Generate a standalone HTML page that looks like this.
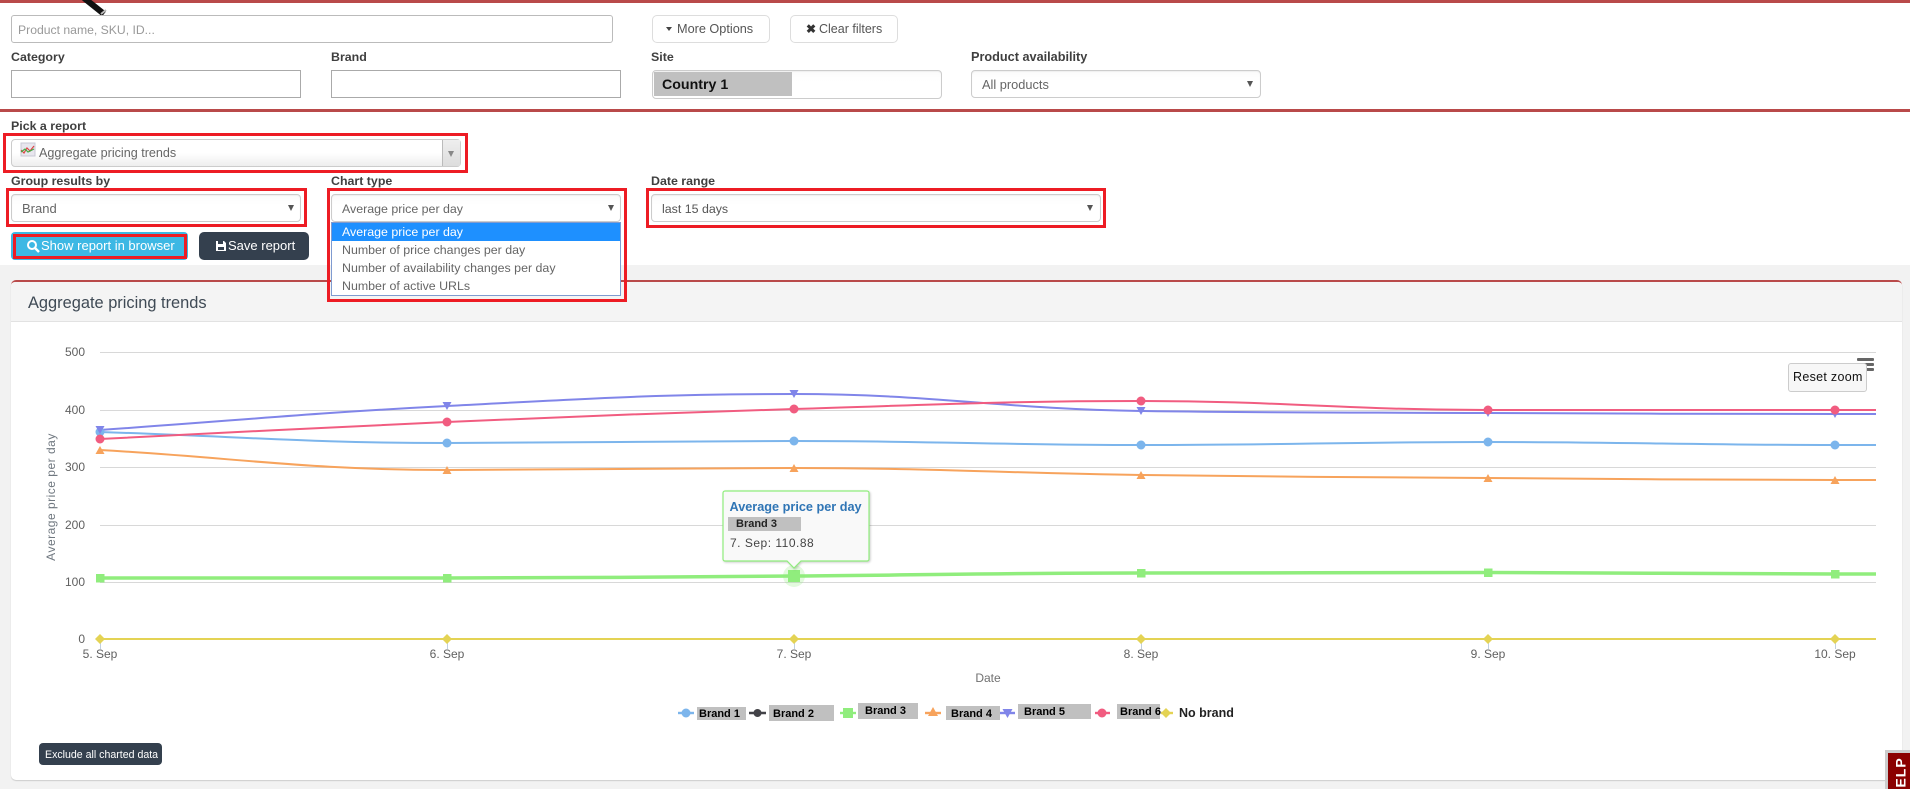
<!DOCTYPE html>
<html><head><meta charset="utf-8"><style>
html,body{margin:0;padding:0;width:1910px;height:789px;overflow:hidden;background:#fff}
body{font-family:"Liberation Sans",sans-serif;position:relative;color:#555}
.a{position:absolute;box-sizing:border-box}
.t{position:absolute;white-space:nowrap;line-height:20px;height:20px}
.l{font-weight:bold;font-size:12.4px;color:#3f3f3f}
.in{background:#fff;border:1px solid #bbb;border-radius:3px}
.sq{background:#fff;border:1px solid #aaa}
.s{background:linear-gradient(#fbfbfb,#fff 40%);border:1px solid #ccc;border-radius:4px;box-shadow:inset 0 1px 1px #eee}
.r{border:3px solid #ed1c24}
.ar{position:absolute;width:0;height:0;border-left:3.5px solid transparent;border-right:3.5px solid transparent;border-top:6px solid #555}
.o{font-size:12.4px;color:#666}
.g{background:#c0c0c0}
.lg{font-size:11px;font-weight:bold;color:#000}
</style></head><body>
<div class="a" style="left:0;top:0;width:1910px;height:3px;background:#b94a4a"></div>
<svg class="a" style="left:80px;top:0" width="32" height="20"><line x1="4" y1="-2" x2="24" y2="14" stroke="#111" stroke-width="6"/><line x1="21" y1="14" x2="26" y2="10" stroke="#bbb" stroke-width="2"/></svg>

<div class="a in" style="left:11px;top:15px;width:602px;height:28px"></div>
<div class="t" style="left:18px;top:20px;font-size:12.2px;color:#999">Product name, SKU, ID...</div>
<div class="a in" style="left:652px;top:15px;width:118px;height:28px;border-color:#ddd;border-radius:5px"></div>
<div class="a" style="left:666px;top:27px;width:0;height:0;border-left:3.5px solid transparent;border-right:3.5px solid transparent;border-top:4px solid #444"></div>
<div class="t" style="left:677px;top:19px;font-size:12.7px;color:#555">More Options</div>
<div class="a in" style="left:790px;top:15px;width:108px;height:28px;border-color:#ddd;border-radius:5px"></div>
<div class="t" style="left:806px;top:19px;font-size:12px;color:#333;font-weight:bold">&#10006;</div>
<div class="t" style="left:819px;top:19px;font-size:12.5px;color:#555">Clear filters</div>

<div class="t l" style="left:11px;top:47px">Category</div>
<div class="t l" style="left:331px;top:47px">Brand</div>
<div class="t l" style="left:651px;top:47px">Site</div>
<div class="t l" style="left:971px;top:47px;font-size:12.7px">Product availability</div>
<div class="a sq" style="left:11px;top:70px;width:290px;height:28px"></div>
<div class="a sq" style="left:331px;top:70px;width:290px;height:28px"></div>
<div class="a s" style="left:652px;top:70px;width:290px;height:29px"></div>
<div class="a g" style="left:654px;top:72px;width:138px;height:24px"></div>
<div class="t" style="left:662px;top:75px;font-size:14.2px;font-weight:bold;color:#111">Country 1</div>
<div class="a s" style="left:971px;top:70px;width:290px;height:28px"></div>
<div class="t o" style="left:982px;top:75px;font-size:12.8px">All products</div>
<div class="ar" style="left:1247px;top:81px"></div>
<div class="a" style="left:0;top:109px;width:1910px;height:3px;background:#b94a4a"></div>

<div class="t l" style="left:11px;top:116px">Pick a report</div>
<div class="a r" style="left:3px;top:133px;width:465px;height:40px"></div>
<div class="a" style="left:11px;top:139px;width:450px;height:28px;border:1px solid #ccc;border-radius:4px;background:linear-gradient(#fff,#fff 50%,#eee)"></div>
<div class="a" style="left:442px;top:140px;width:18px;height:26px;background:linear-gradient(#eee,#ddd);border-left:1px solid #bbb"></div>
<div class="ar" style="left:448px;top:151px;border-top-color:#888"></div>
<svg class="a" style="left:20px;top:142px" width="16" height="15"><rect x="1" y="1" width="14" height="13" fill="#e8e6ee" stroke="#c8c8d4"/><polyline points="1,8 4,11 7,6 10,9 14,4" fill="none" stroke="#d44" stroke-width="1.2"/><polyline points="1,10 5,7 8,10 14,7" fill="none" stroke="#4a4" stroke-width="1.2"/></svg>
<div class="t o" style="left:39px;top:143px;font-size:12.6px">Aggregate pricing trends</div>

<div class="t l" style="left:11px;top:171px">Group results by</div>
<div class="t l" style="left:331px;top:171px">Chart type</div>
<div class="t l" style="left:651px;top:171px">Date range</div>
<div class="a r" style="left:6px;top:188px;width:301px;height:39px"></div>
<div class="a s" style="left:11px;top:194px;width:290px;height:28px"></div>
<div class="t o" style="left:22px;top:199px;font-size:13px">Brand</div>
<div class="ar" style="left:288px;top:205px"></div>
<div class="a s" style="left:331px;top:194px;width:290px;height:28px"></div>
<div class="t o" style="left:342px;top:199px">Average price per day</div>
<div class="ar" style="left:608px;top:205px"></div>
<div class="a r" style="left:646px;top:188px;width:460px;height:40px"></div>
<div class="a s" style="left:651px;top:194px;width:450px;height:28px"></div>
<div class="t o" style="left:662px;top:199px;font-size:12.4px;color:#555">last 15 days</div>
<div class="ar" style="left:1087px;top:205px"></div>

<div class="a" style="left:0;top:265px;width:1910px;height:524px;background:#f2f2f2"></div>

<div class="a" style="left:11px;top:232px;width:177px;height:28px;background:#3db8e4;border-radius:4px"></div>
<div class="a r" style="left:13px;top:234px;width:174px;height:25px"></div>
<svg class="a" style="left:26px;top:239px" width="14" height="14"><circle cx="6" cy="6" r="4" fill="none" stroke="#fff" stroke-width="2"/><line x1="9" y1="9" x2="13" y2="13" stroke="#fff" stroke-width="2.4"/></svg>
<div class="t" style="left:41px;top:236px;font-size:13px;color:#fff">Show report in browser</div>
<div class="a" style="left:199px;top:232px;width:110px;height:28px;background:#34404e;border-radius:5px"></div>
<svg class="a" style="left:215px;top:240px" width="12" height="12"><path d="M1 1H9L11 3V11H1Z" fill="#fff"/><rect x="3" y="1" width="5" height="3" fill="#34404e"/><rect x="3" y="7" width="6" height="3" fill="#34404e"/></svg>
<div class="t" style="left:228px;top:236px;font-size:13px;color:#fff">Save report</div>

<div class="a" style="left:11px;top:280px;width:1891px;height:500px;background:#fff;border-radius:5px;border-top:2px solid #b94a4a;box-shadow:0 1px 1px #ccc"></div>
<div class="a" style="left:11px;top:282px;width:1891px;height:40px;background:#f4f4f4;border-bottom:1px solid #e2e2e2;border-radius:4px 4px 0 0"></div>
<div class="t" style="left:28px;top:293px;font-size:16.4px;color:#3f4a55">Aggregate pricing trends</div>

<svg class="a" style="left:0;top:0" width="1910" height="789" font-family="'Liberation Sans',sans-serif">
<g stroke="#d8d8d8" stroke-width="1">
<line x1="100" y1="352.5" x2="1876" y2="352.5"/><line x1="100" y1="410.5" x2="1876" y2="410.5"/><line x1="100" y1="467.5" x2="1876" y2="467.5"/><line x1="100" y1="525.5" x2="1876" y2="525.5"/><line x1="100" y1="582.5" x2="1876" y2="582.5"/>
</g>
<g stroke="#c0d0e0" stroke-width="1">
<line x1="100.5" y1="639" x2="100.5" y2="649"/><line x1="447.5" y1="639" x2="447.5" y2="649"/><line x1="794.5" y1="639" x2="794.5" y2="649"/><line x1="1141.5" y1="639" x2="1141.5" y2="649"/><line x1="1488.5" y1="639" x2="1488.5" y2="649"/><line x1="1835.5" y1="639" x2="1835.5" y2="649"/>
</g>
<g font-size="12" fill="#606060" text-anchor="end">
<text x="85" y="356">500</text><text x="85" y="414">400</text><text x="85" y="471">300</text><text x="85" y="529">200</text><text x="85" y="586">100</text><text x="85" y="643">0</text>
</g>
<g font-size="12" fill="#606060" text-anchor="middle">
<text x="100" y="658">5. Sep</text><text x="447" y="658">6. Sep</text><text x="794" y="658">7. Sep</text><text x="1141" y="658">8. Sep</text><text x="1488" y="658">9. Sep</text><text x="1835" y="658">10. Sep</text>
<text x="988" y="682" fill="#707070">Date</text>
<text transform="translate(55 497) rotate(-90)" letter-spacing=".5" fill="#707880">Average price per day</text>
</g>
<g fill="none" stroke-width="2">
<path stroke="#7cb5ec" d="M100 432C239 436.4 308 443 447 443C586 443 655 441 794 441C933 441 1002 445 1141 445C1280 445 1349 442 1488 442C1627 442 1696 445 1835 445L1876 445"/>
<path stroke="#f7a35c" d="M100 450C239 458 308 470 447 470C586 470 655 468 794 468C933 468 1002 473 1141 475C1280 477 1349 477 1488 478C1627 479 1696 480 1835 480L1876 480"/>
<path stroke="#8085e9" d="M100 430C239 420.4 308 413.2 447 406C586 398.8 655 394 794 394C933 394 1002 409 1141 411C1280 413 1349 412.4 1488 413C1627 413.6 1696 414 1835 414L1876 414"/>
<path stroke="#f15c80" d="M100 439C239 432.2 308 428 447 422C586 416 655 413.2 794 409C933 404.8 1002 401 1141 401C1280 401 1349 410 1488 410L1876 410"/>
<path stroke="#90ed7d" stroke-width="3.5" d="M100 578C239 578 308 578 447 578C586 578 655 577 794 576C933 575 1002 573 1141 573C1280 573 1349 572.500 1488 572.500C1627 572.500 1696 574 1835 574L1876 574"/>
<path stroke="#e4d354" d="M100 639H1876"/>
</g>
<g fill="#7cb5ec"><circle cx="100" cy="432" r="4.500"/><circle cx="447" cy="443" r="4.500"/><circle cx="794" cy="441" r="4.500"/><circle cx="1141" cy="445" r="4.500"/><circle cx="1488" cy="442" r="4.500"/><circle cx="1835" cy="445" r="4.500"/></g>
<g fill="#f7a35c"><path d="M100 446l4.500 8h-9z"/><path d="M447 466l4.500 8h-9z"/><path d="M794 464l4.500 8h-9z"/><path d="M1141 471l4.500 8h-9z"/><path d="M1488 474l4.500 8h-9z"/><path d="M1835 476l4.500 8h-9z"/></g>
<g fill="#8085e9"><path d="M100 434l4.500-8h-9z"/><path d="M447 410l4.500-8h-9z"/><path d="M794 398l4.500-8h-9z"/><path d="M1141 415l4.500-8h-9z"/><path d="M1488 417l4.500-8h-9z"/><path d="M1835 418l4.500-8h-9z"/></g>
<g fill="#f15c80"><circle cx="100" cy="439" r="4.500"/><circle cx="447" cy="422" r="4.500"/><circle cx="794" cy="409" r="4.500"/><circle cx="1141" cy="401" r="4.500"/><circle cx="1488" cy="410" r="4.500"/><circle cx="1835" cy="410" r="4.500"/></g>
<g fill="#90ed7d"><rect x="96" y="574" width="8.500" height="8.500"/><rect x="443" y="574" width="8.500" height="8.500"/><rect x="1137" y="569" width="8.500" height="8.500"/><rect x="1484" y="568.500" width="8.500" height="8.500"/><rect x="1831" y="570" width="8.500" height="8.500"/>
<circle cx="794" cy="576" r="11" opacity=".25"/><rect x="788" y="570" width="12" height="12"/></g>
<g fill="#e4d354"><path d="M100 634l5 5-5 5-5-5z"/><path d="M447 634l5 5-5 5-5-5z"/><path d="M794 634l5 5-5 5-5-5z"/><path d="M1141 634l5 5-5 5-5-5z"/><path d="M1488 634l5 5-5 5-5-5z"/><path d="M1835 634l5 5-5 5-5-5z"/></g>
<!-- tooltip -->
<path d="M725 491H867a2 2 0 0 1 2 2V559a2 2 0 0 1-2 2H801L794 568L787 561H725a2 2 0 0 1-2-2V493a2 2 0 0 1 2-2Z" fill="#f9f9f9" stroke="#90ed7d" stroke-width="1.2" style="filter:drop-shadow(1px 1px 1px rgba(0,0,0,.2))"/>
<!-- legend lines -->
<g stroke-width="2.4">
<line x1="678" y1="713" x2="694" y2="713" stroke="#7cb5ec"/><line x1="749" y1="713" x2="766" y2="713" stroke="#434348"/><line x1="840" y1="713" x2="856" y2="713" stroke="#90ed7d"/><line x1="925" y1="713" x2="941" y2="713" stroke="#f7a35c"/><line x1="1000" y1="713" x2="1015" y2="713" stroke="#8085e9"/><line x1="1095" y1="713" x2="1110" y2="713" stroke="#f15c80"/><line x1="1161" y1="713" x2="1173" y2="713" stroke="#e4d354"/>
</g>
<circle cx="686" cy="713" r="4.500" fill="#7cb5ec"/><circle cx="757.500" cy="713" r="4" fill="#434348"/><rect x="843" y="708" width="10" height="10" fill="#90ed7d"/><path d="M933 707l5 9h-10z" fill="#f7a35c"/><path d="M1007.500 718l5-9h-10z" fill="#8085e9"/><circle cx="1102" cy="713" r="4.500" fill="#f15c80"/><path d="M1166 708l5 5-5 5-5-5z" fill="#e4d354"/>
<!-- hamburger -->
<g fill="#666"><rect x="1857" y="358" width="17" height="3" rx="1"/><rect x="1861" y="363" width="13" height="3" rx="1"/><rect x="1861" y="368" width="13" height="3" rx="1"/></g>
</svg>

<div class="t" style="left:729.500px;top:497px;font-size:12.700px;font-weight:bold;color:#2f75b5">Average price per day</div>
<div class="a g" style="left:728px;top:517px;width:73px;height:14px"></div>
<div class="t" style="left:736px;top:514px;font-size:11px;font-weight:bold;color:#222">Brand 3</div>
<div class="t" style="left:730px;top:533px;font-size:12px;letter-spacing:.5px;color:#444">7. Sep: 110.88</div>

<div class="a" style="left:1788px;top:363px;width:79px;height:29px;background:#f7f7f7;border:1px solid #ccc;border-radius:3px"></div>
<div class="t" style="left:1793px;top:367px;font-size:12.500px;letter-spacing:.3px;color:#111">Reset zoom</div>

<div class="a g" style="left:697px;top:707px;width:49px;height:13px"></div><div class="t lg" style="left:699px;top:704px">Brand 1</div>
<div class="a g" style="left:769px;top:705px;width:65px;height:16px"></div><div class="t lg" style="left:773px;top:704px">Brand 2</div>
<div class="a g" style="left:858px;top:703px;width:60px;height:16px"></div><div class="t lg" style="left:865px;top:701px">Brand 3</div>
<div class="a g" style="left:946px;top:706px;width:54px;height:14px"></div><div class="t lg" style="left:951px;top:704px">Brand 4</div>
<div class="a g" style="left:1018px;top:704px;width:73px;height:15px"></div><div class="t lg" style="left:1024px;top:702px">Brand 5</div>
<div class="a g" style="left:1117px;top:704px;width:43px;height:15px"></div><div class="t lg" style="left:1120px;top:702px">Brand 6</div>
<div class="t" style="left:1179px;top:703px;font-size:12.500px;font-weight:bold;color:#222">No brand</div>

<div class="a" style="left:39px;top:743px;width:123px;height:22px;background:#34404e;border-radius:4px"></div>
<div class="t" style="left:45px;top:745px;font-size:10.600px;color:#fff">Exclude all charted data</div>

<div class="a r" style="left:327px;top:188px;width:300px;height:114px"></div>
<div class="a" style="left:331px;top:222px;width:290px;height:74px;background:#fff;border:1px solid #7f9bd0"></div>
<div class="a" style="left:332px;top:223px;width:288px;height:18px;background:#1e90ff"></div>
<div class="t o" style="left:342px;top:222px;color:#fff">Average price per day</div>
<div class="t o" style="left:342px;top:240px">Number of price changes per day</div>
<div class="t o" style="left:342px;top:258px">Number of availability changes per day</div>
<div class="t o" style="left:342px;top:276px">Number of active URLs</div>

<div class="a" style="left:1885px;top:750px;width:25px;height:39px;background:#8b0000;border-left:3px solid #ccc;border-top:3px solid #ccc;overflow:hidden">
<div class="t" style="left:-8px;top:15px;font-size:14px;color:#fff;font-weight:bold;transform:rotate(-90deg);letter-spacing:1px">HELP</div>
</div>
</body></html>
